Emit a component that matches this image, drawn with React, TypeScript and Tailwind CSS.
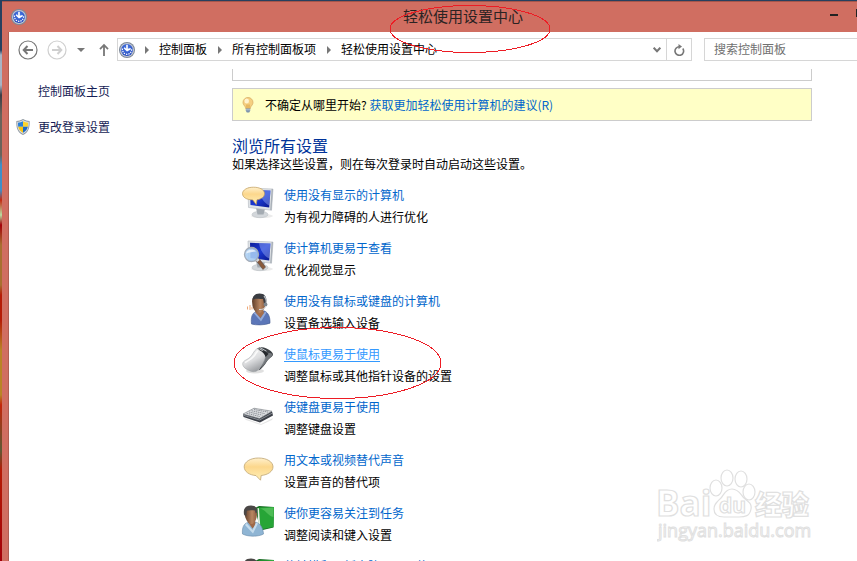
import { useId } from "react";

function EaseIcon({ className }: { className: string }) {
  const id = useId();
  return (
    <svg viewBox="0 0 16 16" className={className} aria-hidden="true">
      <defs>
        <radialGradient id={id} cx="50%" cy="35%" r="65%">
          <stop offset="0" stopColor="#4f80e8" />
          <stop offset="1" stopColor="#2348bd" />
        </radialGradient>
      </defs>
      <circle cx="8" cy="8" r="8" fill="#7c8797" />
      <circle cx="8" cy="8" r="7" fill="#c2c9d6" />
      <circle cx="8" cy="8" r="5.900" fill={`url(#${id})`} />
      <path d="M3.300 6.500C3.300 10 5.300 12.300 8 12.300s4.700-2.300 4.700-5.300" fill="none" stroke="#fff" strokeWidth="1.200" strokeDasharray="1.400 1" />
      <path d="M7.200 2.800h1.600v4l2.700-.9.500 1.300L8 9.400 4.600 6.300l1-1 1.600 1.500z" fill="#fff" />
    </svg>
  );
}

function Shield() {
  return (
    <svg viewBox="0 0 14 16" className="h-4 w-3.5 shrink-0" aria-hidden="true">
      <path d="M7 0c2 1.300 4.300 1.900 6.600 1.900.4 6.500-1 11.600-6.600 14C1.400 13.500 0 8.400.4 1.900 2.700 1.900 5 1.300 7 0z" fill="#8c959e" />
      <path d="M7 .9c2 1.200 3.800 1.700 5.800 1.800.2 5.700-1 10-5.800 12.300C2.200 12.700 1 8.400 1.200 2.700 3.200 2.600 5 2.100 7 .9z" fill="#d9dde2" />
      <path d="M7 2.300v5.500H2.200C2 6.500 2 5.200 2 3.700c1.900-.1 3.400-.5 5-1.400z" fill="#2a80d8" />
      <path d="M7 2.300v5.500h4.800c.2-1.300.2-2.600.2-4.100-1.900-.1-3.400-.5-5-1.400z" fill="#fbd32a" />
      <path d="M2.200 7.800H7v6c-2.800-1.400-4.200-3.400-4.800-6z" fill="#f6c411" />
      <path d="M11.800 7.800H7v6c2.800-1.400 4.200-3.400 4.800-6z" fill="#1c69c4" />
    </svg>
  );
}

function Bulb() {
  return (
    <svg viewBox="0 0 12 16" className="h-4 w-3 shrink-0" aria-hidden="true">
      <path d="M6 .5a4.900 4.900 0 0 1 5 4.900c0 2-1.300 3-2.100 4.300-.3.6-.4 1.200-.5 1.800H3.600c-.1-.6-.2-1.200-.5-1.800C2.300 8.400 1 7.400 1 5.400A4.900 4.900 0 0 1 6 .5z" fill="#f5cf80" stroke="#d6a860" strokeWidth=".7" />
      <ellipse cx="4.700" cy="4" rx="2.300" ry="2.500" fill="#fff3cf" />
      <path d="M5 11V7.500M7 11V7.500" stroke="#cf8d2d" strokeWidth=".7" />
      <path d="M3.800 11.400h4.400v2.400L7.200 15.500H4.800l-1-1.700z" fill="#7d93ac" />
      <path d="M3.800 12.800h4.400" stroke="#c5d3e0" strokeWidth=".8" />
    </svg>
  );
}

type IconName = "screenTalk" | "screenLens" | "headset" | "mouse" | "keyboard" | "bubble" | "book";

function Monitor({ fill }: { fill: string }) {
  return (
    <>
      <ellipse cx="20" cy="30" rx="11" ry="2" fill="#000" opacity=".08" />
      <ellipse cx="18" cy="28.500" rx="8" ry="3.200" fill="#d3d7db" stroke="#b4babf" strokeWidth=".5" />
      <path d="M14 22l9 1-1.500 5.500h-6z" fill="#a4abb2" />
      <path d="M6 2l25 1-1.500 21.200L6.500 21.500z" fill="#dfe3e7" stroke="#b3b9bf" strokeWidth=".6" />
      <path d="M8 3.800l20.500.8-1.300 17L8.500 19z" fill={fill} />
      <path d="M17 4.200l11.500.4-1.200 15C22 17 18 11 17 4.200z" fill="#a9beff" opacity=".4" />
      <path d="M31 3l-1.500 21.200-1.300-.2L29.600 3z" fill="#a9b0b8" />
    </>
  );
}

function ItemIcon({ name }: { name: IconName }) {
  const blue = useId();
  const gold = useId();
  const grey = useId();
  const skin = useId();
  return (
    <svg viewBox="0 0 32 32" className="mt-0.5 size-8 shrink-0 overflow-visible" aria-hidden="true">
      <defs>
        <linearGradient id={blue} x1="0" y1="0" x2="1" y2="1">
          <stop offset="0" stopColor="#0b1d9a" />
          <stop offset=".5" stopColor="#1b39d2" />
          <stop offset="1" stopColor="#0a188c" />
        </linearGradient>
        <linearGradient id={gold} x1="0" y1="0" x2="0" y2="1">
          <stop offset="0" stopColor="#fff0cc" />
          <stop offset=".4" stopColor="#fcd78c" />
          <stop offset="1" stopColor="#fff0b8" />
        </linearGradient>
        <linearGradient id={grey} x1=".2" y1="0" x2=".7" y2="1">
          <stop offset="0" stopColor="#fafafa" />
          <stop offset=".5" stopColor="#dcdddf" />
          <stop offset="1" stopColor="#8f9296" />
        </linearGradient>
        <linearGradient id={skin} x1="0" y1="0" x2="1" y2="0">
          <stop offset="0" stopColor="#5f3d29" />
          <stop offset=".6" stopColor="#b98661" />
          <stop offset="1" stopColor="#8a5b3e" />
        </linearGradient>
      </defs>
      {name === "screenTalk" && (
        <>
          <Monitor fill={`url(#${blue})`} />
          <path
            d="M11.500 1.200c6.200 0 11 2.500 11 6.300 0 3.300-3 5.600-7.500 6.300l-.8 4.700-3.400-4.600C4.500 13.800.5 11.300.5 7.600s4.800-6.400 11-6.400z"
            fill={`url(#${gold})`}
            stroke="#c29c58"
            strokeWidth=".7"
          />
        </>
      )}
      {name === "screenLens" && (
        <>
          <Monitor fill={`url(#${blue})`} />
          <path d="M14.500 22l2.500-2.500 6.500 8.500-2.500 2.500z" fill="#8a5a3c" stroke="#5c4a42" strokeWidth=".6" />
          <path d="M13.500 20.800l2.300-2.100 1.800 2.300-2.300 2z" fill="#d6d9dc" />
          <circle cx="9.500" cy="15.500" r="7" fill="#a8cdf3" fillOpacity=".88" stroke="#a3acb8" strokeWidth="1.300" />
          <path d="M4 14.500c1-4 7-5.500 10-2-3 .2-7 1-10 2z" fill="#fff" opacity=".7" />
        </>
      )}
      {name === "headset" && (
        <g transform="translate(0 1)">
          <path d="M9.500 31c-.8-7 .5-11 5-12.500l8-.5c4 1.800 5.700 6 5.500 12.200-5 2-14 2.200-18.500.8z" fill="#5b76b8" stroke="#40578f" strokeWidth=".6" />
          <path d="M13.500 17.500h8l.5 2.800-3.500 4.700-5-5z" fill="#a56f4d" />
          <path d="M13 19l5.500 6.500L23 18.500l1.500 1-5.500 9L11.500 20z" fill="#93aad8" />
          <path d="M10 8c.5-5 4-7 7.500-6.700 5 .3 6.500 4 6 9C23 16 20.500 20 17 20c-3 0-5.500-3-6.500-7z" fill={`url(#${skin})`} />
          <path d="M10.500 7C10.500 3 13 .5 17.500.5c5.500 0 7.300 3.500 6.800 8.500l-2 3-1.300-6c-3 0-8-1.300-10.500 1z" fill="#3a3d42" />
          <path d="M22 3c2.500 3 3 6 1.500 10" fill="none" stroke="#b9bec5" strokeWidth="1.200" />
          <circle cx="23.500" cy="11.500" r="1.900" fill="#7e868e" />
          <path d="M24 13.500c-1.500 2.500-4 3.200-7 3" fill="none" stroke="#d3d8de" />
          <path d="M5.500 13.500v3M8 12v5M10 14v2.500" stroke="#eda878" strokeWidth="1" />
        </g>
      )}
      {name === "mouse" && (
        <>
          <ellipse cx="13" cy="26" rx="9" ry="2.500" fill="#000" opacity=".12" />
          <path d="M15 3.500c3-1.800 6-1.700 9.500 0 3.500 1.500 5.800 3.300 6.500 5.500.3 2.800-3.500 3.500-6 7.300-2.500 4-5.200 7.700-8.500 9.200l5-10z" fill="#3c4044" />
          <path d="M22 8.500c3-1.200 6-.6 8.500.5.3 1.500-2.800 3.500-5.200 6.500-2 2.700-3.800 5.700-6.300 7.500 2.500-4.500 4-9 3-14.500z" fill="#74787c" />
          <path
            d="M14.500 4c2.200-1.200 5 .2 7 2.200 2.300 2.200 2.500 4.300 1.500 7.300-1 3.200-3 7.300-5.800 10.500-2 2.300-4.700 3.300-7.700 2.400C5.500 25.200.7 22.600.7 18.900c0-3.200 4.300-4 7.100-6.400C10.700 10 12 5.600 14.500 4z"
            fill={`url(#${grey})`}
            stroke="#9da0a4"
            strokeWidth=".5"
          />
          <path d="M3 17.500c3-1.800 6.500-3 9.500-7 1.500-2 2-4 3.500-4.500" fill="none" stroke="#fff" strokeWidth="1.600" opacity=".8" />
          <path d="M15.500 3.300l5.500 3 1-.6 4.500 3c-1 1.300-2 2-2.800 3.600-.6-2.700-3.200-5.500-6.200-7z" fill="#24282c" />
          <path d="M18 2.600l6.500 3.600" stroke="#c4c8cc" strokeWidth="1" />
        </>
      )}
      {name === "keyboard" && (
        <>
          <path d="M2 20l17 6 12-6-1 2-11 5L4 22z" fill="#000" opacity=".1" />
          <path d="M1 16.500l11-6 18 3 1 4L18 24.500 1.500 19z" fill="#3c4048" />
          <path d="M1 16l11-5.800 18 3L17.500 20.500z" fill="#dcdee1" stroke="#80848a" strokeWidth=".6" />
          <path d="M4.500 15.200l13.500 3.400M7 14l13.500 3.200M9.500 12.700l13.500 3M12 11.500l14 2.600" stroke="#83888e" strokeWidth=".9" strokeDasharray="1.500 .7" />
          <path d="M1.500 17.300l16 4.700L30.500 15" fill="none" stroke="#9ba0a6" strokeWidth=".8" />
        </>
      )}
      {name === "bubble" && (
        <path
          d="M16.500 7c8.300 0 14.500 3.800 14.500 8.800 0 4.600-5 8-11.800 8.700l-.7 4.700-4.500-4.600C7.200 24 2.200 20.600 2.200 15.800S8.200 7 16.500 7z"
          fill={`url(#${gold})`}
          stroke="#bfa471"
          strokeWidth=".8"
        />
      )}
      {name === "book" && (
        <g transform="translate(0 1)">
          <path d="M13 3l4-2 15 1-.5 20.500-13 3z" fill="#156b20" />
          <path d="M17 2.500l1.500 22 13-2.400L32 2z" fill="#27a537" />
          <path d="M18 3.500c6 1 8 8 13.500 8.500V2.500z" fill="#73d374" opacity=".5" />
          <path d="M15.500 3l1.500.3 1.500 21-2-.5z" fill="#e6f2e5" />
          <path d="M.5 29c-.6-6 1-10 5-11.500l8-.5c5 1.500 7.500 6 8 12-5 2.800-15 3-21 0z" fill="#8fb5d4" stroke="#6488a8" strokeWidth=".6" />
          <path d="M5.500 16.500H13l1 3.500-3.500 3.500z" fill="#9f6948" />
          <path d="M4.500 18l6 7 3.500-7.500 2 1-5 10L3 20z" fill="#c5dced" />
          <path d="M2.500 8c0-5 3-7 6.500-7 4.500 0 6.500 3 6 8.500-.5 5.500-2.500 9.500-5.800 9.500C6 19 3 14 2.500 8z" fill={`url(#${skin})`} />
          <path d="M2 9.500C1 3 4 .5 9 .5s6.500 3 6 7l-1.200 1-1-3c-2.500-.3-6-.3-8 .5l-.6 5.500z" fill="#4a4746" />
        </g>
      )}
    </svg>
  );
}

const items: { icon: IconName; title: string; text: string; active?: boolean }[] = [
  { icon: "screenTalk", title: "使用没有显示的计算机", text: "为有视力障碍的人进行优化" },
  { icon: "screenLens", title: "使计算机更易于查看", text: "优化视觉显示" },
  { icon: "headset", title: "使用没有鼠标或键盘的计算机", text: "设置备选输入设备" },
  { icon: "mouse", title: "使鼠标更易于使用", text: "调整鼠标或其他指针设备的设置", active: true },
  { icon: "keyboard", title: "使键盘更易于使用", text: "调整键盘设置" },
  { icon: "bubble", title: "用文本或视频替代声音", text: "设置声音的替代项" },
  { icon: "book", title: "使你更容易关注到任务", text: "调整阅读和键入设置" },
  { icon: "book", title: "使触摸和平板电脑更易于使用", text: "调整触摸和平板电脑的设置" },
];

const crumbs = ["控制面板", "所有控制面板项", "轻松使用设置中心"];

function TitleBar() {
  return (
    <header className="flex h-[31px] shrink-0 items-center border-t border-[#a5564c] pl-[9px]">
      <EaseIcon className="size-4 shrink-0" />
      <h1 className="ml-[69px] flex-1 pb-0.5 text-center text-[15px] leading-5 text-[#2b2323]">轻松使用设置中心</h1>
      <button type="button" aria-label="最小化" className="mr-[18px] flex h-5 w-2 items-center pb-1">
        <span className="h-0.5 w-2 bg-[#222]" />
      </button>
      <button type="button" aria-label="最大化" className="mb-2 h-2 w-px bg-[#222]" />
    </header>
  );
}

function NavArrow({ label, color, flip }: { label: string; color: string; flip?: boolean }) {
  return (
    <button type="button" aria-label={label} className={color}>
      <svg viewBox="0 0 20 20" className={flip ? "size-5 rotate-180" : "size-5"} fill="none" stroke="currentColor">
        <circle cx="10" cy="10" r="9" strokeWidth="1.200" />
        <path d="M15 10H6M9.500 6L5.700 10l3.800 4" strokeWidth="2" />
      </svg>
    </button>
  );
}

function Toolbar() {
  return (
    <nav className="flex h-[37px] shrink-0 items-center pb-0.5 pl-[9px]">
      <div className="flex gap-[9px]">
        <NavArrow label="后退" color="text-[#777]" />
        <NavArrow label="前进" color="text-[#cfcfcf]" flip />
      </div>
      <button type="button" aria-label="最近浏览的位置" className="ml-2.5 text-[#777]">
        <svg viewBox="0 0 8 4" className="h-1 w-2" fill="currentColor">
          <path d="M0 0h8L4 4z" />
        </svg>
      </button>
      <button type="button" aria-label="上移" className="ml-3.5 text-[#777]">
        <svg viewBox="0 0 10 14" className="h-3.5 w-2.5" fill="none" stroke="currentColor">
          <path d="M5 13V2M1 6.200L5 2l4 4.200" strokeWidth="1.800" />
        </svg>
      </button>
      <div className="ml-2 flex h-[23px] flex-1 items-center border border-[#d6d6d6]">
        <EaseIcon className="ml-px size-4 shrink-0" />
        {crumbs.map((c) => (
          <span key={c} className="flex items-center">
            <svg viewBox="0 0 4 8" className="mx-2.5 h-2 w-1 fill-[#777]" aria-hidden="true">
              <path d="M0 0l4 4-4 4z" />
            </svg>
            <a href="#" className="pr-px pb-0.5 leading-4 text-black">{c}</a>
          </span>
        ))}
        <button type="button" aria-label="展开地址" className="mr-[5px] ml-auto text-[#777]">
          <svg viewBox="0 0 8 6" className="h-1.5 w-2" fill="none" stroke="currentColor">
            <path d="M.7.700L4 4.200 7.300.7" strokeWidth="2" />
          </svg>
        </button>
        <button type="button" aria-label="刷新" className="flex h-full w-[25px] items-center justify-center border-l border-[#d6d6d6] text-[#777]">
          <svg viewBox="0 0 12 12" className="size-3" fill="none" stroke="currentColor">
            <path d="M9.800 4.500A4.300 4.300 0 1 1 6.500 2.700" strokeWidth="1.600" />
            <path d="M5.500 0v5.200L9 2.600z" fill="currentColor" stroke="none" />
          </svg>
        </button>
      </div>
      <input
        type="search"
        aria-label="搜索控制面板"
        placeholder="搜索控制面板"
        className="ml-3 h-[23px] w-[153px] rounded-none border border-r-0 border-[#d6d6d6] bg-white px-[9px] pb-0.5 leading-4 placeholder:text-[#707070]"
      />
    </nav>
  );
}

function Watermark() {
  return (
    <div className="pointer-events-none absolute right-[42px] bottom-[18px] w-[158px]" aria-hidden="true">
      <svg viewBox="0 0 158 74" className="w-full" fill="#fff" stroke="#e0e0e0" strokeWidth="1.200">
        <text x="-1" y="47" fontSize="35" fontWeight="700" className="font-['Open_Sans',sans-serif]">Bai</text>
        <ellipse cx="59" cy="19" rx="6" ry="8" />
        <ellipse cx="70" cy="9" rx="6" ry="8" />
        <ellipse cx="84" cy="10" rx="6" ry="8" />
        <ellipse cx="92" cy="23" rx="6" ry="8" />
        <path d="M75 20c7 0 9 6 12 9 5 4 8 6 7 11-1 7-6 8-12 8H67c-6 0-10-2-10-8 0-5 3-7 7-11 3-3 4-9 11-9z" />
        <text x="62" y="44" fontSize="21" fontWeight="700" className="font-['Open_Sans',sans-serif]">du</text>
        <text x="98" y="46" fontSize="27" fontWeight="900" className="font-['Noto_Sans_CJK_SC',sans-serif]">经验</text>
        <text x="1" y="68" fontSize="18" fontWeight="400" strokeWidth="1" className="font-['Open_Sans',sans-serif]">jingyan.baidu.com</text>
      </svg>
    </div>
  );
}

export default function App() {
  return (
    <div className="relative flex h-screen flex-col overflow-hidden bg-[linear-gradient(to_bottom,#26405f_0,#26405f_50px,#a9b4c4_55px,#a9b4c4_85px,#3c3c44_95px,#6c6259_115px,#6c6259_155px,#408fc8_165px,#408fc8_190px,#c32a12_200px,#b9dca0_215px,#a30008_225px,#a87030_245px,#a87030_285px,#b51b05_295px,#b51b05_320px,#b98426_350px,#b98426_395px,#c42508_405px,#5d5a35_450px,#b51b05_470px,#a30008_100%)] pt-px pl-0.5 font-['Noto_Sans_CJK_SC',sans-serif] text-[12px] text-black">
      <div className="flex min-h-0 flex-1 flex-col bg-[#d06e61]">
        <TitleBar />
        <div className="ml-1.5 flex min-h-0 flex-1 flex-col border-l border-[#b05d52] bg-white">
          <Toolbar />
          <div className="flex min-h-0 flex-1">
            <aside className="flex w-[223px] shrink-0 flex-col gap-4 pt-3 pl-[7px] leading-5 text-[#151c55]">
              <a href="#" className="ml-[22px]">控制面板主页</a>
              <a href="#" className="flex items-center gap-2">
                <Shield />
                更改登录设置
              </a>
            </aside>
            <main className="min-w-0 flex-1 overflow-hidden pr-[45px]">
              <div className="h-3 border border-t-0 border-[#ccc]" />
              <section className="mt-[7px] flex h-[33px] items-center border border-[#ccc] bg-[#ffffc6] pl-[9px]">
                <Bulb />
                <p className="ml-[11px] leading-4">
                  不确定从哪里开始? <a href="#" className="text-[#0066cc]">获取更加轻松使用计算机的建议(R)</a>
                </p>
              </section>
              <h2 className="mt-3.5 text-[16px] leading-5 text-[#003399]">浏览所有设置</h2>
              <p className="mt-px leading-4">如果选择这些设置，则在每次登录时自动启动这些设置。</p>
              <ul className="mt-3 flex flex-col gap-2.5 pl-2.5">
                {items.map((it) => (
                  <li key={it.title} className="flex gap-2.5 leading-[21px]">
                    <ItemIcon name={it.icon} />
                    <div className="flex flex-col items-start gap-px">
                      <a href="#" className={it.active ? "text-[#3399ff] underline underline-offset-2" : "text-[#0066cc]"}>
                        {it.title}
                      </a>
                      <p>{it.text}</p>
                    </div>
                  </li>
                ))}
              </ul>
            </main>
          </div>
        </div>
      </div>
      <svg className="pointer-events-none absolute inset-0 size-full" fill="none" stroke="#ed1c24" shapeRendering="crispEdges" aria-hidden="true">
        <ellipse cx="470" cy="29" rx="80" ry="23.500" />
        <ellipse cx="337.500" cy="363" rx="103.500" ry="35.500" />
      </svg>
      <Watermark />
    </div>
  );
}
